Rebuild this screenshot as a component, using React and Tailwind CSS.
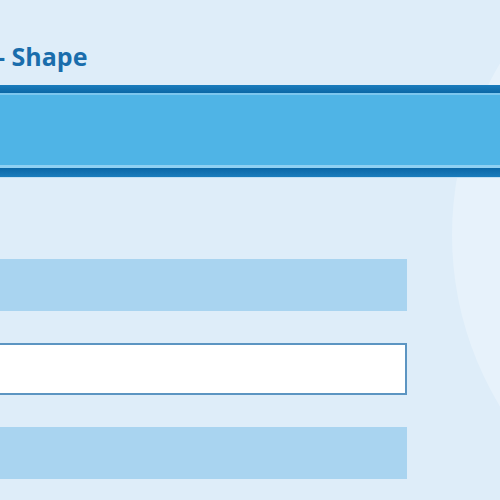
export default function App() {
  const rows = ['filled', 'input', 'filled'];

  return (
    <div className="relative w-[500px] h-[500px] overflow-hidden bg-[#deedf9] font-['Open_Sans',sans-serif]">
      {/* soft background circle */}
      <div className="absolute left-[452px] top-[-95px] w-[660px] h-[660px] rounded-full bg-[#e7f2fb]" />

      <div className="relative flex flex-col">
        <h1 className="h-[85px] pt-[40px] -ml-[3px] whitespace-nowrap text-[25px] leading-[32px] font-bold text-[#1a6dac]">
          - Shape
        </h1>

        <div className="h-[93px] flex flex-col">
          <div className="h-[8px] bg-gradient-to-b from-[#1a7dbd] to-[#0b67a6]" />
          <div className="h-[2px] bg-[#7cc6ee]" />
          <div className="flex-1 bg-[#4fb4e6]" />
          <div className="h-[3px] bg-[#8fd0f2]" />
          <div className="h-[9px] bg-gradient-to-b from-[#0b67a6] to-[#1a7dbd]" />
          <div className="h-[1px] bg-[#c4e1f4]" />
        </div>

        <div className="mt-[81px] flex flex-col gap-[32px]">
          {rows.map((r, i) =>
            r === 'input' ? (
              <div key={i} className="w-[407px] h-[52px] bg-white border-2 border-l-0 border-[#5c95c2]" />
            ) : (
              <div key={i} className="w-[407px] h-[52px] bg-[#a9d4f0]" />
            )
          )}
        </div>
      </div>
    </div>
  );
}
